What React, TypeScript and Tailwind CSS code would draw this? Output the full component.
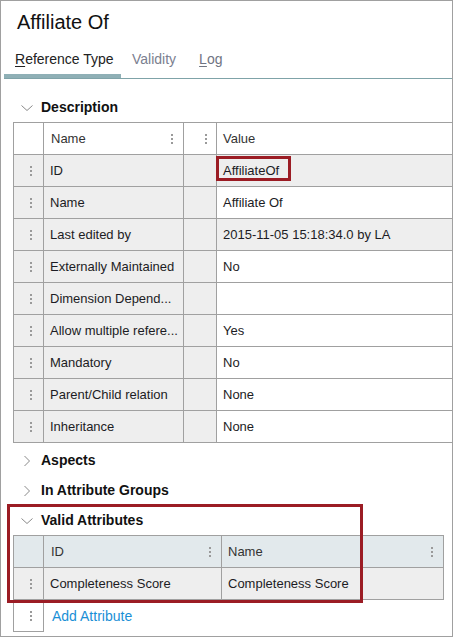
import React from "react"

const font = { fontFamily: '"Liberation Sans", Arial, sans-serif' }

function Kebab() {
  return (
    <div className="flex flex-col gap-[2px]">
      <span className="block h-[2px] w-[2px] bg-[#9a9a9a]" />
      <span className="block h-[2px] w-[2px] bg-[#9a9a9a]" />
      <span className="block h-[2px] w-[2px] bg-[#9a9a9a]" />
    </div>
  )
}

function Chevron({ open }: { open: boolean }) {
  return (
    <svg width="12" height="12" viewBox="0 0 12 12" className="shrink-0">
      {open ? (
        <polyline points="0.5,3.5 6,8.5 11.5,3.5" fill="none" stroke="#8a8a8a" strokeWidth="1" />
      ) : (
        <polyline points="3.5,1 8.5,6 3.5,11" fill="none" stroke="#8a8a8a" strokeWidth="1" />
      )}
    </svg>
  )
}

function SectionHeader({ title, open }: { title: string; open: boolean }) {
  return (
    <div className="flex h-[30px] items-center pl-[20px] pt-[1px]">
      <Chevron open={open} />
      <span className="ml-[8px] text-[14px] font-bold text-[#111]">{title}</span>
    </div>
  )
}

const rows = [
  { name: "ID", value: "AffiliateOf", readonly: true, marked: true },
  { name: "Name", value: "Affiliate Of" },
  { name: "Last edited by", value: "2015-11-05 15:18:34.0 by LA", readonly: true },
  { name: "Externally Maintained", value: "No" },
  { name: "Dimension Depend...", value: "" },
  { name: "Allow multiple refere...", value: "Yes" },
  { name: "Mandatory", value: "No" },
  { name: "Parent/Child relation", value: "None" },
  { name: "Inheritance", value: "None" },
]

const cell = "border-r border-b border-[#a0a0a0] h-[32px] flex items-center"

export default function App() {
  return (
    <div
      className="relative h-[637px] w-[453px] overflow-hidden border border-[#a0a0a0] bg-white text-[13px] text-[#1c1c24]"
      style={font}
    >
      <div className="mt-[7px] h-[28px] pl-[16px] text-[20px] leading-[28px] text-[#111]">Affiliate Of</div>

      <div className="ml-[3px] mt-[12px] flex border-b border-[#7fa3a8] text-[14px] leading-[20px]">
        <div className="w-[117px] border-b-4 border-[#8fb0b6] pb-[5px] pl-[11px] pt-[1px] text-[#222]">
          <span className="underline underline-offset-2">R</span>eference Type
        </div>
        <div className="border-b-4 border-transparent pb-[5px] pl-[11px] pr-[12px] pt-[1px] text-[#7b8090]">Validity</div>
        <div className="border-b-4 border-transparent pb-[5px] pl-[11px] pt-[1px] text-[#6f7482]">
          <span className="underline underline-offset-2">L</span>og
        </div>
      </div>

      <div className="mt-[13px]">
        <SectionHeader title="Description" open />
      </div>

      <div className="ml-[12px] grid w-[440px] grid-cols-[30px_140px_33px_236px] border-l border-t border-[#a0a0a0]">
        <div className={cell} />
        <div className={`${cell} justify-between pl-[7px] pr-[10px] text-[#333]`}>
          <span>Name</span>
          <Kebab />
        </div>
        <div className={`${cell} justify-end pr-[9px]`}>
          <Kebab />
        </div>
        <div className={`${cell} pl-[6px] text-[#333]`}>Value</div>

        {rows.map((r) => (
          <React.Fragment key={r.name}>
            <div className={`${cell} justify-center bg-[#eeeeee] pl-[4px]`}>
              <Kebab />
            </div>
            <div className={`${cell} overflow-hidden whitespace-nowrap bg-[#eeeeee] pl-[6px]`}>{r.name}</div>
            <div className={`${cell} bg-[#eeeeee]`} />
            <div className={`${cell} relative whitespace-nowrap pl-[6px] ${r.readonly ? "bg-[#eeeeee]" : "bg-white"}`}>
              {r.value}
              {r.marked && (
                <div className="absolute left-[-1px] top-[1px] h-[25px] w-[75px] border-[3px] border-[#9b1c24]" />
              )}
            </div>
          </React.Fragment>
        ))}
      </div>

      <div className="mt-[2px]">
        <SectionHeader title="Aspects" open={false} />
        <SectionHeader title="In Attribute Groups" open={false} />
        <SectionHeader title="Valid Attributes" open />
      </div>

      <div className="ml-[12px] grid w-[431px] grid-cols-[30px_178px_222px] border-l border-t border-[#a0a0a0]">
        <div className={`${cell} h-[31px] bg-[#e2e9ec]`} />
        <div className={`${cell} h-[31px] justify-between bg-[#e2e9ec] pl-[7px] pr-[10px] text-[#333]`}>
          <span>ID</span>
          <Kebab />
        </div>
        <div className={`${cell} h-[31px] justify-between bg-[#e2e9ec] pl-[6px] pr-[10px] text-[#333]`}>
          <span>Name</span>
          <Kebab />
        </div>

        <div className={`${cell} justify-center bg-[#eeeeee] pl-[4px]`}>
          <Kebab />
        </div>
        <div className={`${cell} bg-[#eeeeee] pl-[6px]`}>Completeness Score</div>
        <div className={`${cell} bg-[#eeeeee] pl-[6px]`}>Completeness Score</div>
      </div>

      <div className="ml-[12px] flex">
        <div className={`${cell} w-[31px] justify-center border-l pl-[4px]`}>
          <Kebab />
        </div>
        <button className="ml-[8px] h-[32px] text-[14px] text-[#1a8fd6]">Add Attribute</button>
      </div>

      <div className="absolute left-[6px] top-[503px] h-[99px] w-[356px] border-[3px] border-[#9b1c24]" />
    </div>
  )
}
